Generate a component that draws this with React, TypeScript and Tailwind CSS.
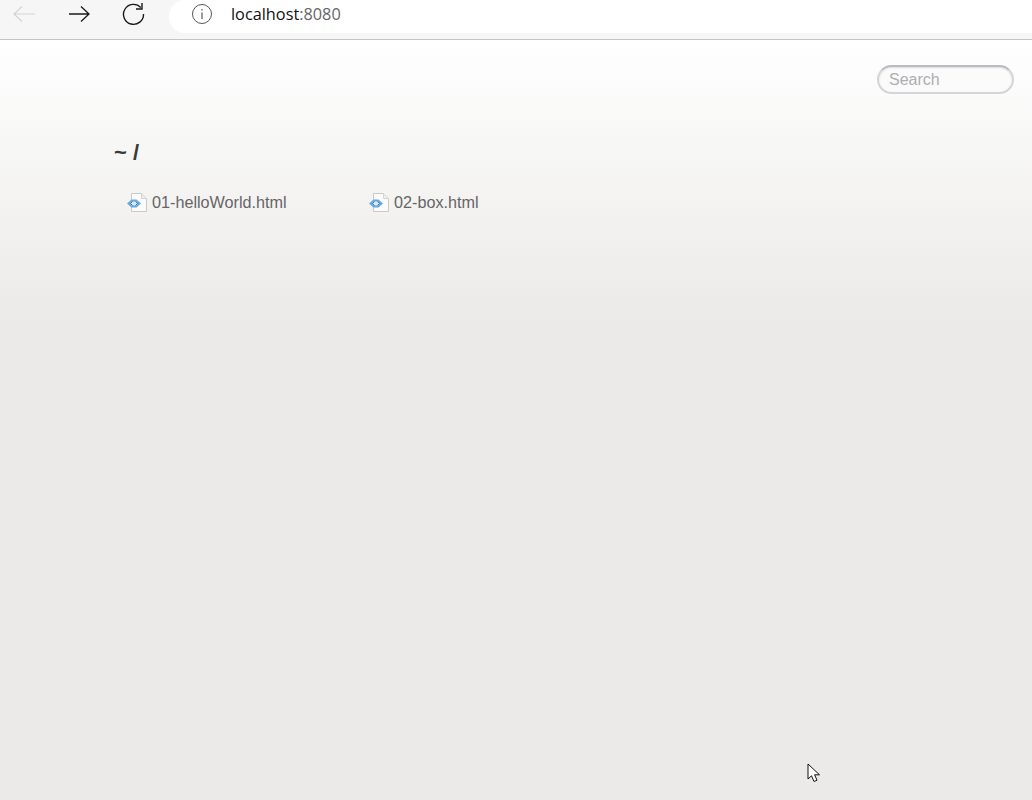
import React from "react";

function Back({ className }: { className: string }) {
  return (
    <svg width="24" height="18" viewBox="0 0 24 18" fill="none" stroke="currentColor" strokeWidth="1.2" className={className}>
      <path d="M23 9H2M10 1.5 2 9l8 7.5" />
    </svg>
  );
}

function Forward() {
  return (
    <svg width="24" height="18" viewBox="0 0 24 18" fill="none" stroke="#1a1a1a" strokeWidth="1.3">
      <path d="M2 9h20M14 1.5 22 9l-8 7.5" />
    </svg>
  );
}

function Reload() {
  return (
    <svg width="24" height="24" viewBox="0 0 24 24" fill="none" stroke="#1a1a1a" strokeWidth="1.4">
      <path d="M18.8 5.5A10 10 0 1 0 21.5 12" />
      <path d="M20 1v6h-6" />
    </svg>
  );
}

function Info() {
  return (
    <svg width="22" height="22" viewBox="0 0 22 22" fill="none" stroke="#555" strokeWidth="1">
      <circle cx="11" cy="11" r="9.5" />
      <path d="M11 9.5V16" strokeWidth="1.2" />
      <path d="M11 6v1.6" strokeWidth="1.2" />
    </svg>
  );
}

function FileIcon() {
  return (
    <svg width="21" height="21" viewBox="0 0 21 21" className="shrink-0">
      <path d="M4.5 1.5h10l5 5v13h-15z" fill="#fbfbfb" stroke="#c9c9c9" strokeWidth="1" />
      <path d="M14.5 1.5v5h5" fill="#eee" stroke="#d4d4d4" strokeWidth="1" />
      <path d="M4.5 7.5h5L14 11.5l-4.5 4h-5L0 11.5z" fill="#6aa8de" />
      <path d="M5 9.5h4l2 2-2 2H5l-2-2z" fill="#d5e7f6" />
      <path d="M5.5 9.5 3.5 11.5 5.5 13.5M8.5 9.5l2 2-2 2" stroke="#2f7cc4" strokeWidth="1" fill="none" />
    </svg>
  );
}

function Cursor() {
  return (
    <svg width="14" height="20" viewBox="0 0 14 20" className="absolute left-[807px] top-[763px]">
      <path d="M1 1v15l3.5-3.2L7 18.5l3-1.3-2.4-5.4H12.5z" fill="#fff" stroke="#111" strokeWidth="1" strokeLinejoin="round" />
    </svg>
  );
}

function Entry({ name }: { name: string }) {
  return (
    <li className="flex w-[242px] items-center gap-[4px]">
      <FileIcon />
      <span>{name}</span>
    </li>
  );
}

export default function App() {
  return (
    <div className="relative flex h-[800px] flex-col overflow-hidden bg-[#ebeae8] font-['Liberation_Sans',sans-serif]">
      <header className="flex h-10 shrink-0 border-b border-[#c4c4c4] bg-[#f6f6f6]">
        <div className="flex w-[169px] shrink-0 items-center pb-[11px] pl-[12px]">
          <Back className="text-[#d4d4d4]" />
          <span className="ml-[31px] flex"><Forward /></span>
          <span className="ml-[31px] flex"><Reload /></span>
        </div>
        <div className="flex h-[33px] flex-1 items-center rounded-l-[16px] bg-white pb-[5px] pl-[22px]">
          <Info />
          <span className="ml-[18px] font-['Open_Sans',sans-serif] text-[16.3px] text-[#111]">
            localhost<span className="text-[#666]">:8080</span>
          </span>
        </div>
      </header>
      <main className="flex-1 bg-gradient-to-b from-white from-0% to-[#ebeae8] to-[280px]">
        <div className="flex justify-end pt-[25px] pr-[18px]">
          <div className="flex h-[29px] w-[137px] items-center rounded-full border-2 border-[#d4d5d7] border-t-[#b9bbc0] bg-[#fbfbfb] pl-[10px] text-[16px] text-[#aeaeb2] shadow-[inset_0_1px_2px_rgba(0,0,0,0.12)]">
            Search
          </div>
        </div>
        <h1 className="mt-[45px] pl-[114px] text-[22px] leading-[28px] font-bold text-[#3a3a3a]">~ /</h1>
        <ul className="mt-[25px] flex pl-[127px] text-[16.2px] leading-[21px] text-[#666]">
          <Entry name="01-helloWorld.html" />
          <Entry name="02-box.html" />
        </ul>
      </main>
      <Cursor />
    </div>
  );
}
